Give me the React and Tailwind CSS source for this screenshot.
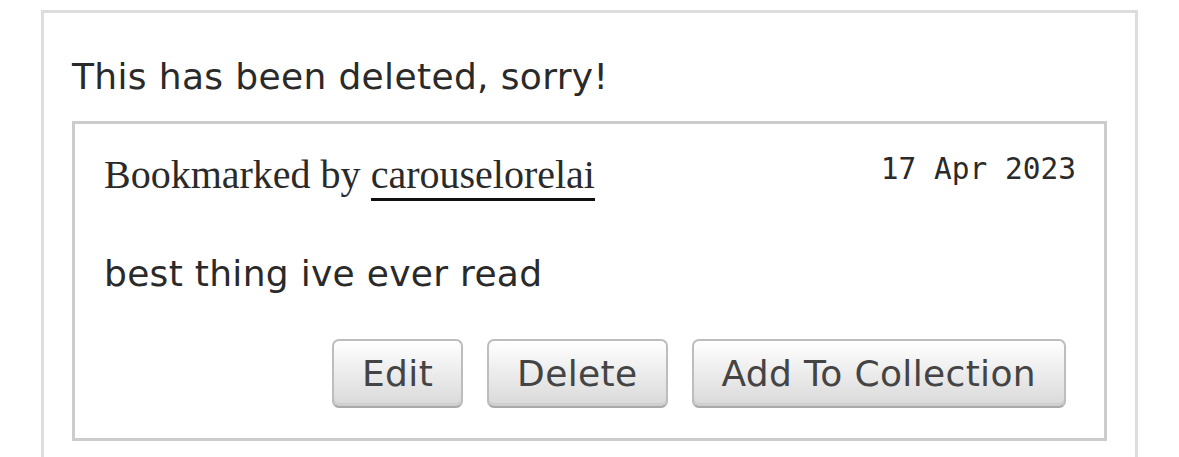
import React from 'react';

// Deleted-work bookmark blurb
const buttons = ['Edit', 'Delete', 'Add To Collection'];

function ActionButton({ label }) {
  return (
    <button
      type="button"
      className="flex h-[69px] items-center rounded-[7px] border-2 border-[#bdbdbd] border-b-[#a9a9a9] bg-gradient-to-b from-[#ffffff] via-[#ececec] to-[#d9d9d9] px-[28px] text-[36px] leading-[42px] tracking-[0.35px] text-[#444] shadow-[inset_0_-3px_0_#cfcfcf]"
    >
      {label}
    </button>
  );
}

export default function App() {
  return (
    <div className="min-h-[457px] bg-white pt-[10px] font-['DejaVu_Sans','Liberation_Sans',sans-serif] text-[#2a2a2a]">
      <div className="mx-[41px] border-[3px] border-[#dddddd] px-[28px] pb-[40px] pt-[43px]">
        <p className="text-[36px] leading-[42px] tracking-[0.35px]">This has been deleted, sorry!</p>

        <div className="mt-[23px] border-[3px] border-[#cccccc] pb-[30px] pl-[29px] pr-[28px] pt-[29px]">
          {/* Header: byline + date */}
          <div className="flex items-start justify-between">
            <h4 className="font-['Liberation_Serif',serif] text-[40px] font-normal leading-[44px] text-[#2a2a2a]">
              Bookmarked by{' '}
              <a href="#" className="border-b-[3px] border-[#111] pb-[1px] text-[#2a2a2a]">
                carouselorelai
              </a>
            </h4>
            <p className="mt-[1px] font-['DejaVu_Sans_Mono','Liberation_Mono',monospace] text-[29.5px] leading-[30px]">
              17 Apr 2023
            </p>
          </div>

          {/* Note */}
          <p className="mt-[56px] text-[36px] leading-[42px] tracking-[0.3px]">best thing ive ever read</p>

          {/* Actions */}
          <div className="mt-[44px] flex justify-end gap-[24px] pr-[10px]">
            {buttons.map((b) => (
              <ActionButton key={b} label={b} />
            ))}
          </div>
        </div>
      </div>
    </div>
  );
}
